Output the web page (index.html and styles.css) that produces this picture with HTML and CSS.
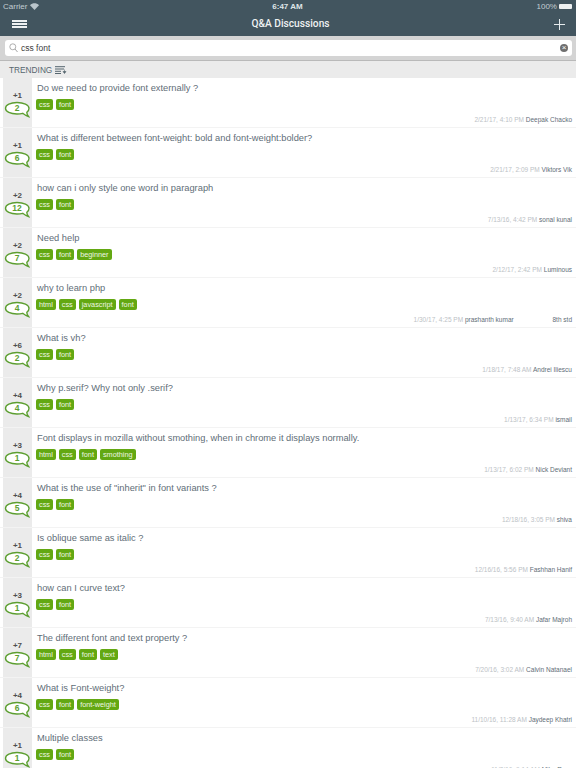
FILE: index.html
```html
<!DOCTYPE html>
<html lang="en">
  <head>
    <meta charset="UTF-8" />
    <title>Q&amp;A Discussions</title>
    <link rel="stylesheet" href="styles.css">
  </head>
  <body>
    <svg class="defs" width="0" height="0">
      <symbol id="bubble" viewBox="0 0 26 18">
        <path d="M13 1.500C6.500 1.500 1.500 3.800 1.500 7.300S6.500 13 13 13c2 0 4-.2 5.700-.7 1.500 1.200 3.300 2.500 5.800 3.200-1-1.200-1.700-2.800-1.700-4.200 1.700-1 2.200-2.400 2.200-4C25 3.800 19.500 1.500 13 1.500Z" fill="#fff" stroke="#5c9e30" stroke-width="1.400"/>
      </symbol>
    </svg>
    <div class="page">
      <div class="statusbar">
        <div class="carrier">Carrier
          <svg width="9" height="7" viewBox="0 0 9 7"><path d="M4.500 7 0 2.200C2.600-.4 6.400-.4 9 2.200Z" fill="#b9c4ca"/></svg>
        </div>
        <div class="clock">6:47 AM</div>
        <div class="battery">100% <span class="battery-icon"></span></div>
      </div>
      <div class="navbar">
        <div class="burger"><span></span><span></span><span></span></div>
        <div class="nav-title">Q&amp;A Discussions</div>
        <svg class="plus" width="11" height="11" viewBox="0 0 11 11"><path d="M5.500 0v11M0 5.500h11" stroke="#e6ebed" stroke-width="1"/></svg>
      </div>
      <div class="searchbar">
        <div class="searchbox">
          <svg width="9" height="10" viewBox="0 0 9 10"><circle cx="3.800" cy="3.800" r="3" fill="none" stroke="#9a9a9a" stroke-width=".8"/><path d="M6 6l2.500 3" stroke="#9a9a9a" stroke-width=".9"/></svg>
          <span class="query">css font</span>
          <span class="clear">×</span>
        </div>
      </div>
      <div class="subhead">
        TRENDING
        <svg width="12" height="8" viewBox="0 0 12 8"><path d="M0 .7h10M0 3h9M0 5.300h6M0 7.500h6" stroke="#56666f" stroke-width="1"/><path d="M9.500 3.500v2.500M8 5.500h3l-1.500 2Z" fill="#56666f" stroke="#56666f" stroke-width=".6"/></svg>
      </div>
      <div class="list">

        <div class="row">
          <div class="rail"><div class="votes">+1</div><div class="bubble"><svg width="26" height="18"><use href="#bubble"/></svg><span>2</span></div></div>
          <div class="body">
            <div class="title">Do we need to provide font externally ?</div>
            <div class="tags"><span class="tag">css</span><span class="tag">font</span></div>
            <div class="meta"><span class="date">2/21/17, 4:10 PM</span> <span class="author">Deepak Chacko</span></div>
          </div>
        </div>

        <div class="row">
          <div class="rail"><div class="votes">+1</div><div class="bubble"><svg width="26" height="18"><use href="#bubble"/></svg><span>6</span></div></div>
          <div class="body">
            <div class="title">What is different between font-weight: bold and font-weight:bolder?</div>
            <div class="tags"><span class="tag">css</span><span class="tag">font</span></div>
            <div class="meta"><span class="date">2/21/17, 2:09 PM</span> <span class="author">Viktors Vik</span></div>
          </div>
        </div>

        <div class="row">
          <div class="rail"><div class="votes">+2</div><div class="bubble"><svg width="26" height="18"><use href="#bubble"/></svg><span>12</span></div></div>
          <div class="body">
            <div class="title">how can i only style one word in paragraph</div>
            <div class="tags"><span class="tag">css</span><span class="tag">font</span></div>
            <div class="meta"><span class="date">7/13/16, 4:42 PM</span> <span class="author">sonal kunal</span></div>
          </div>
        </div>

        <div class="row">
          <div class="rail"><div class="votes">+2</div><div class="bubble"><svg width="26" height="18"><use href="#bubble"/></svg><span>7</span></div></div>
          <div class="body">
            <div class="title">Need help</div>
            <div class="tags"><span class="tag">css</span><span class="tag">font</span><span class="tag">beginner</span></div>
            <div class="meta"><span class="date">2/12/17, 2:42 PM</span> <span class="author">Luminous</span></div>
          </div>
        </div>

        <div class="row">
          <div class="rail"><div class="votes">+2</div><div class="bubble"><svg width="26" height="18"><use href="#bubble"/></svg><span>4</span></div></div>
          <div class="body">
            <div class="title">why to learn php</div>
            <div class="tags"><span class="tag">html</span><span class="tag">css</span><span class="tag">javascript</span><span class="tag">font</span></div>
            <div class="meta"><span class="date">1/30/17, 4:25 PM</span> <span class="author">prashanth kumar</span> <span class="author extra">8th std</span></div>
          </div>
        </div>

        <div class="row">
          <div class="rail"><div class="votes">+6</div><div class="bubble"><svg width="26" height="18"><use href="#bubble"/></svg><span>2</span></div></div>
          <div class="body">
            <div class="title">What is vh?</div>
            <div class="tags"><span class="tag">css</span><span class="tag">font</span></div>
            <div class="meta"><span class="date">1/18/17, 7:48 AM</span> <span class="author">Andrei Iliescu</span></div>
          </div>
        </div>

        <div class="row">
          <div class="rail"><div class="votes">+4</div><div class="bubble"><svg width="26" height="18"><use href="#bubble"/></svg><span>4</span></div></div>
          <div class="body">
            <div class="title">Why p.serif? Why not only .serif?</div>
            <div class="tags"><span class="tag">css</span><span class="tag">font</span></div>
            <div class="meta"><span class="date">1/13/17, 6:34 PM</span> <span class="author">ismail</span></div>
          </div>
        </div>

        <div class="row">
          <div class="rail"><div class="votes">+3</div><div class="bubble"><svg width="26" height="18"><use href="#bubble"/></svg><span>1</span></div></div>
          <div class="body">
            <div class="title">Font displays in mozilla without smothing, when in chrome it displays normally.</div>
            <div class="tags"><span class="tag">html</span><span class="tag">css</span><span class="tag">font</span><span class="tag">smothing</span></div>
            <div class="meta"><span class="date">1/13/17, 6:02 PM</span> <span class="author">Nick Deviant</span></div>
          </div>
        </div>

        <div class="row">
          <div class="rail"><div class="votes">+4</div><div class="bubble"><svg width="26" height="18"><use href="#bubble"/></svg><span>5</span></div></div>
          <div class="body">
            <div class="title">What is the use of "inherit" in font variants ?</div>
            <div class="tags"><span class="tag">css</span><span class="tag">font</span></div>
            <div class="meta"><span class="date">12/18/16, 3:05 PM</span> <span class="author">shiva</span></div>
          </div>
        </div>

        <div class="row">
          <div class="rail"><div class="votes">+1</div><div class="bubble"><svg width="26" height="18"><use href="#bubble"/></svg><span>2</span></div></div>
          <div class="body">
            <div class="title">Is oblique same as italic ?</div>
            <div class="tags"><span class="tag">css</span><span class="tag">font</span></div>
            <div class="meta"><span class="date">12/16/16, 5:56 PM</span> <span class="author">Fashhan Hanif</span></div>
          </div>
        </div>

        <div class="row">
          <div class="rail"><div class="votes">+3</div><div class="bubble"><svg width="26" height="18"><use href="#bubble"/></svg><span>1</span></div></div>
          <div class="body">
            <div class="title">how can I curve text?</div>
            <div class="tags"><span class="tag">css</span><span class="tag">font</span></div>
            <div class="meta"><span class="date">7/13/16, 9:40 AM</span> <span class="author">Jafar Majroh</span></div>
          </div>
        </div>

        <div class="row">
          <div class="rail"><div class="votes">+7</div><div class="bubble"><svg width="26" height="18"><use href="#bubble"/></svg><span>7</span></div></div>
          <div class="body">
            <div class="title">The different font and text property ?</div>
            <div class="tags"><span class="tag">html</span><span class="tag">css</span><span class="tag">font</span><span class="tag">text</span></div>
            <div class="meta"><span class="date">7/20/16, 3:02 AM</span> <span class="author">Calvin Natanael</span></div>
          </div>
        </div>

        <div class="row">
          <div class="rail"><div class="votes">+4</div><div class="bubble"><svg width="26" height="18"><use href="#bubble"/></svg><span>6</span></div></div>
          <div class="body">
            <div class="title">What is Font-weight?</div>
            <div class="tags"><span class="tag">css</span><span class="tag">font</span><span class="tag">font-weight</span></div>
            <div class="meta"><span class="date">11/10/16, 11:28 AM</span> <span class="author">Jaydeep Khatri</span></div>
          </div>
        </div>

        <div class="row">
          <div class="rail"><div class="votes">+1</div><div class="bubble"><svg width="26" height="18"><use href="#bubble"/></svg><span>1</span></div></div>
          <div class="body">
            <div class="title">Multiple classes</div>
            <div class="tags"><span class="tag">css</span><span class="tag">font</span></div>
            <div class="meta"><span class="date">11/2/16, 9:14 AM</span> <span class="author">Mike Ross</span></div>
          </div>
        </div>

      </div>
    </div>
  </body>
</html>
```

FILE: styles.css
```css
html,
body {
  margin: 0;
  padding: 0;
  font-family: "Liberation Sans", Arial, Helvetica, sans-serif;
  background-color: #fff;
}

.defs {
  position: absolute;
}

.page {
  width: 576px;
  height: 768px;
  overflow: hidden;
}

.statusbar {
  height: 12px;
  background-color: #42555f;
  display: flex;
  justify-content: space-between;
  align-items: center;
  padding: 0 4px 0 3px;
  font-size: 8px;
  color: #c3ced3;
}

.carrier {
  display: flex;
  align-items: center;
  gap: 3px;
  width: 100px;
}

.clock {
  color: #dfe5e8;
  font-weight: bold;
}

.battery {
  display: flex;
  align-items: center;
  justify-content: flex-end;
  gap: 2px;
  width: 100px;
}

.battery-icon {
  width: 13px;
  height: 5px;
  background-color: #eef1f2;
  border-radius: 1px;
}

.navbar {
  height: 24px;
  background-color: #42555f;
  display: flex;
  align-items: center;
  justify-content: space-between;
  padding: 0 11px 0 12px;
}

.burger {
  width: 15px;
  display: flex;
  flex-direction: column;
  gap: 1.500px;
}

.burger span {
  height: 1.500px;
  background-color: #eef1f2;
}

.nav-title {
  color: #eef1f2;
  font-family: Roboto, sans-serif;
  font-size: 10.200px;
  font-weight: 500;
  margin-bottom: 1px;
}

.searchbar {
  height: 25px;
  background-color: #d4d4d4;
  padding: 4px 4px 4px 5px;
  box-sizing: border-box;
  border-bottom: 1px solid #b9b9b9;
}

.searchbox {
  height: 16px;
  background-color: #fff;
  border-radius: 3px;
  display: flex;
  align-items: center;
  padding: 0 4px 0 4px;
  gap: 3px;
}

.query {
  flex: 1;
  font-size: 8.500px;
  color: #3c3c3c;
}

.clear {
  width: 8px;
  height: 8px;
  background-color: #6f6f6f;
  border-radius: 50%;
  color: #fff;
  font-size: 8px;
  line-height: 8px;
  text-align: center;
}

.subhead {
  height: 17px;
  background-color: #ebebeb;
  display: flex;
  align-items: center;
  gap: 3px;
  padding-left: 9px;
  font-size: 8.300px;
  color: #56666f;
}

.row {
  height: 50px;
  display: flex;
  box-sizing: border-box;
  border-bottom: 1px solid #f3f3f3;
  padding-left: 3px;
}

.rail {
  width: 29px;
  background-color: #ebebeb;
  display: flex;
  flex-direction: column;
  align-items: center;
  padding-top: 13px;
  box-sizing: border-box;
}

.votes {
  font-size: 8px;
  font-weight: bold;
  color: #4f4f4f;
  line-height: 10px;
}

.bubble {
  position: relative;
  width: 26px;
  height: 18px;
  margin-left: -1px;
}

.bubble span {
  position: absolute;
  left: 0;
  right: 0;
  top: 1px;
  text-align: center;
  font-size: 8.500px;
  line-height: 12px;
  font-weight: bold;
  color: #5c9e30;
}

.body {
  flex: 1;
  padding: 4px 4px 0 5px;
  display: flex;
  flex-direction: column;
  min-width: 0;
}

.title {
  font-size: 9.300px;
  line-height: 13px;
  color: #5f6e78;
}

.tags {
  display: flex;
  gap: 3px;
  margin-top: 4px;
  margin-left: -1px;
}

.tag {
  background-color: #63a812;
  color: #eef6e2;
  font-size: 7.300px;
  line-height: 11px;
  padding: 0 3px;
  border-radius: 2px;
}

.meta {
  margin-top: auto;
  padding-bottom: 3px;
  text-align: right;
  font-size: 6.500px;
  line-height: 9px;
}

.date {
  color: #bcc2c6;
}

.author {
  color: #5f6e78;
}

.extra {
  margin-left: 37px;
}
```
